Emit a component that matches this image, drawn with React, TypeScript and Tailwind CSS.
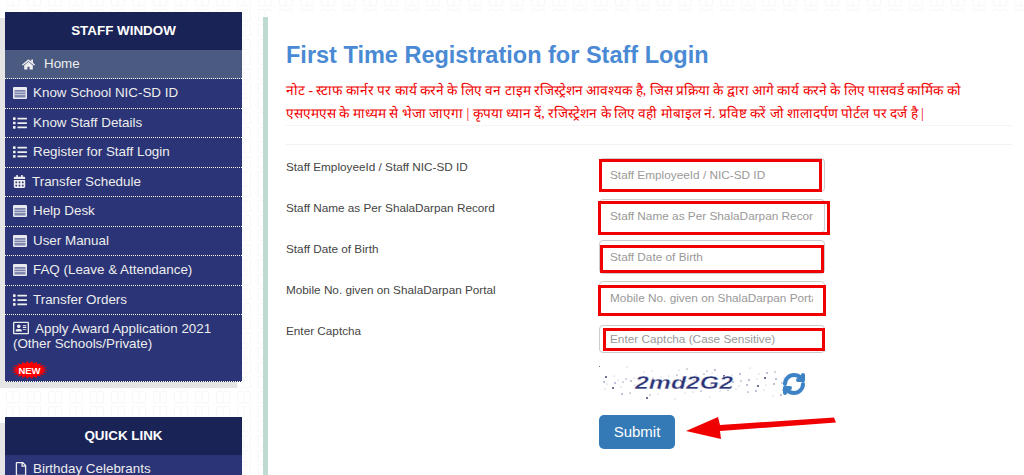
import { FaHome, FaList, FaCalendarAlt, FaRegAddressCard, FaRegFile } from "react-icons/fa"
import { RefreshCw } from "lucide-react"

const patternUri = "url(\"data:image/svg+xml,%3Csvg xmlns='http://www.w3.org/2000/svg' width='21' height='14.7'%3E%3Cpath d='M7.5 1.5h3.5l2 1.5 2-1.5h3.5q1 0 1 1v9q0 1-1 1h-11q-1 0-1-1v-9q0-1 1-1zM13 3v9.5' fill='none' stroke='%23f7f7f7'/%3E%3C/svg%3E\")"

const menu = [
    { icon: "table", label: "Know School NIC-SD ID" },
    { icon: "list", label: "Know Staff Details" },
    { icon: "list", label: "Register for Staff Login" },
    { icon: "cal", label: "Transfer Schedule" },
    { icon: "table", label: "Help Desk" },
    { icon: "table", label: "User Manual" },
    { icon: "table", label: "FAQ (Leave & Attendance)" },
    { icon: "list", label: "Transfer Orders" },
]

// the red boxes were drawn by hand over the inputs, so each has its own offset
const fields = [
    { label: "Staff EmployeeId / Staff NIC-SD ID", ph: "Staff EmployeeId / NIC-SD ID", input: "h-[34px]", mark: "left-0 top-[1px] w-[223px] h-[33px]" },
    { label: "Staff Name as Per ShalaDarpan Record", ph: "Staff Name as Per ShalaDarpan Record", input: "h-[34px]", mark: "-left-[1px] top-[2px] w-[232px] h-[34px]" },
    { label: "Staff Date of Birth", ph: "Staff Date of Birth", input: "h-[34px]", mark: "left-[1px] top-[5px] w-[224px] h-[28px]" },
    { label: "Mobile No. given on ShalaDarpan Portal", ph: "Mobile No. given on ShalaDarpan Portal", input: "h-[34px]", mark: "-left-[1px] top-[4px] w-[228px] h-[31px]" },
    { label: "Enter Captcha", ph: "Enter Captcha (Case Sensitive)", input: "h-[28px] mt-[3px]", mark: "left-[4px] top-[3px] w-[222px] h-[23px]" },
]

const burst = Array.from({ length: 44 }, (_, i) => {
    const a = (i / 44) * Math.PI * 2
    const k = i % 2 === 0 ? 1 : 0.72
    return `${(18.5 + Math.cos(a) * 18.5 * k).toFixed(1)},${(9 + Math.sin(a) * 9 * k).toFixed(1)}`
}).join(" ")

const specks = Array.from({ length: 90 }, (_, i) => ({
    x: (i * 67 + (i % 7) * 13) % 186,
    y: (i * 29 + (i % 5) * 11) % 36,
    r: i % 4 === 0 ? 1 : 0.6,
    c: i % 3 === 0 ? "#3b4377" : "#a9aec9",
}))

function TableIcon() {
    return (
        <svg width="14" height="12" viewBox="0 0 14 12" className="shrink-0">
            <rect x="0" y="0" width="14" height="12" rx="1" fill="#e8e8ee" />
            <rect x="1.5" y="3" width="11" height="7.5" fill="#7c84ad" />
            <path d="M1.5 5.2h11M1.5 7.6h11" stroke="#e8e8ee" strokeWidth="0.8" />
        </svg>
    )
}

function MenuIcon({ name }: { name: string }) {
    if (name === "list") return <FaList size={14} className="shrink-0" />
    if (name === "cal") return <FaCalendarAlt size={13} className="shrink-0" />
    return <TableIcon />
}

export default function App() {
    return (
        <div
            className="w-[1024px] h-[475px] overflow-hidden bg-white flex pt-3 pl-[5px] text-[13.4px] text-[#444] relative"
            style={{ backgroundImage: patternUri, backgroundPosition: "0 -6.5px", fontFamily: '"Liberation Sans", Arial, sans-serif' }}
        >
            <aside className="w-[237px] shrink-0 flex flex-col gap-[35px] mr-[21px]">
                <div className="bg-[#2a3476] text-[#eeeeee] shadow-[-5px_6px_0_#e5e5e5] border-b border-dotted border-white">
                    <h3 className="h-[38px] bg-[#1a2356] flex items-center justify-center text-[13.4px] font-bold text-white">STAFF WINDOW</h3>
                    <div className="h-[29px] bg-[#4a5a80] flex items-center gap-[9px] pl-[17px] border-b border-dotted border-white">
                        <FaHome size={13} className="shrink-0" />
                        <span>Home</span>
                    </div>
                    {menu.map((m) => (
                        <div key={m.label} className="h-[29.5px] flex items-center gap-[6px] pl-[8px] border-b border-dotted border-white">
                            <MenuIcon name={m.icon} />
                            <span>{m.label}</span>
                        </div>
                    ))}
                    <div className="h-[66px] pl-[8px] pt-[5px] leading-[15px] relative">
                        <div className="flex items-center gap-[6px]">
                            <FaRegAddressCard size={16} className="shrink-0" />
                            <span>Apply Award Application 2021</span>
                        </div>
                        <div>(Other Schools/Private)</div>
                        <svg width="37" height="18" viewBox="0 0 37 18" className="absolute left-[6px] bottom-[2px]">
                            <polygon fill="#ff0000" points={burst} />
                            <text x="18.5" y="12.5" textAnchor="middle" fontSize="9.5" fontWeight="bold" fill="white">NEW</text>
                        </svg>
                    </div>
                </div>
                <div className="bg-[#2a3476] text-[#eeeeee] shadow-[-5px_6px_0_#e5e5e5]">
                    <h3 className="h-[38px] bg-[#1a2356] flex items-center justify-center text-[13.4px] font-bold text-white">QUICK LINK</h3>
                    <div className="h-[27px] flex items-center gap-[5px] pl-[9px] leading-[13px]">
                        <FaRegFile size={14} className="shrink-0" />
                        <span>Birthday Celebrants</span>
                    </div>
                </div>
            </aside>

            <div className="w-[5px] mt-[5px] shrink-0 bg-[#bfdad0]" />

            <main className="w-[756px] h-[470px] bg-white pl-[18px] pr-[12px]">
                <h1 className="mt-[28px] text-[23.5px] leading-[30px] font-bold text-[#4a8ad4]">First Time Registration for Staff Login</h1>
                <p className="mt-[10px] text-[13.6px] leading-[22.5px] text-[#f00000] border-b border-[#f5f5f5]" style={{ fontFamily: '"Liberation Serif", serif' }}>
                    नोट - स्टाफ कार्नर पर कार्य करने के लिए वन टाइम रजिस्ट्रेशन आवश्यक है, जिस प्रक्रिया के द्वारा आगे कार्य करने के लिए पासवर्ड कार्मिक को एसएमएस के माध्यम से भेजा जाएगा | कृपया ध्यान दें, रजिस्ट्रेशन के लिए वही मोबाइल नं. प्रविष्ट करें जो शालादर्पण पोर्टल पर दर्ज है |
                </p>
                <div className="mt-[18px] border-t border-[#f2f2f2] pt-[13px] flex flex-col">
                    {fields.map((f) => (
                        <div key={f.label} className="flex h-[41px]">
                            <label className="w-[313px] shrink-0 text-[11.75px] leading-[16px] pt-[1px]">{f.label}</label>
                            <div className={"relative w-[226px] " + f.input}>
                                <input
                                    placeholder={f.ph}
                                    className="w-full h-full rounded-[4px] border border-[#cccccc] bg-white pl-[10px] pr-[11px] text-[11.8px] outline-none placeholder:text-[#999999]"
                                />
                                <div className={"absolute border-[3px] border-[#f00000] " + f.mark} />
                            </div>
                        </div>
                    ))}
                </div>
                <div className="ml-[313px] mt-[3px] h-[36px] flex items-center">
                    <svg width="186" height="36" viewBox="0 0 186 36" className="shrink-0">
                        {specks.map((s, i) => (
                            <circle key={i} cx={s.x} cy={s.y} r={s.r} fill={s.c} />
                        ))}
                        <text x="36" y="23" fontSize="17.5" fontWeight="bold" fontStyle="italic" textLength="98" lengthAdjust="spacingAndGlyphs" fill="#2a3476" stroke="#ffffff" strokeWidth="0.3">2md2G2</text>
                    </svg>
                    <RefreshCw size={24} strokeWidth={4} className="shrink-0 -ml-[3px] text-[#3d82c4]" />
                </div>
                <button className="ml-[313px] mt-[13px] w-[76px] h-[34px] rounded-[5px] bg-[#337ab7] text-white text-[15px]">Submit</button>
            </main>

            {/* hand drawn arrow pointing at the submit button */}
            <svg width="160" height="30" viewBox="0 0 160 30" className="absolute left-[680px] top-[412px]">
                <polygon fill="#f00000" points="6,19 38,5 40,13 154,5.5 156,10.5 40,19 41,27" />
            </svg>
        </div>
    )
}
